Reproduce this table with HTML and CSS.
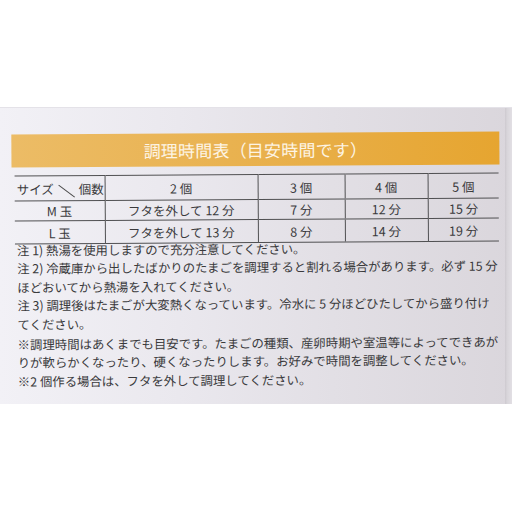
FILE: index.html
```html
<!DOCTYPE html>
<html lang="ja">
<head>
<meta charset="utf-8">
<link rel="stylesheet" href="styles.css">
</head>
<body>
<div class="top"></div>
<div class="panel">
  <div class="content">
    <div class="banner">調理時間表（目安時間です）</div>
    <table class="tbl">
      <colgroup>
        <col class="c1"><col class="c2"><col class="c3"><col class="c4"><col class="c5">
      </colgroup>
      <tr class="r-head">
        <td class="size">サイズ<svg class="slash" width="18" height="14" viewBox="0 0 18 14"><line x1="1" y1="1" x2="17" y2="13" stroke="#4a4a4a" stroke-width="1"/></svg>個数</td>
        <td>2 個</td>
        <td>3 個</td>
        <td>4 個</td>
        <td>5 個</td>
      </tr>
      <tr class="r-m">
        <td>M 玉</td>
        <td>フタを外して 12 分</td>
        <td>7 分</td>
        <td>12 分</td>
        <td>15 分</td>
      </tr>
      <tr class="r-l">
        <td>L 玉</td>
        <td>フタを外して 13 分</td>
        <td>8 分</td>
        <td>14 分</td>
        <td>19 分</td>
      </tr>
    </table>
    <div class="notes">
      <div class="line">注 1)&nbsp;熱湯を使用しますので充分注意してください。</div>
      <div class="line">注 2)&nbsp;冷蔵庫から出したばかりのたまごを調理すると割れる場合があります。必ず 15 分</div>
      <div class="line">ほどおいてから熱湯を入れてください。</div>
      <div class="line">注 3)&nbsp;調理後はたまごが大変熱くなっています。冷水に&nbsp;5&nbsp;分ほどひたしてから盛り付け</div>
      <div class="line">てください。</div>
      <div class="line gap">※調理時間はあくまでも目安です。たまごの種類、産卵時期や室温等によってできあが</div>
      <div class="line">りが軟らかくなったり、硬くなったりします。お好みで時間を調整してください。</div>
      <div class="line">※2 個作る場合は、フタを外して調理してください。</div>
    </div>
  </div>
</div>
</body>
</html>
```
FILE: styles.css
```css
html, body {
  margin: 0;
  padding: 0;
  background: #ffffff;
}
body {
  width: 512px;
  height: 512px;
  overflow: hidden;
  font-family: "Noto Sans CJK JP", "Noto Sans", sans-serif;
  color: #3a3a3c;
}
.top {
  height: 107px;
  background: #ffffff;
}
.panel {
  position: relative;
  height: 297px;
  background: linear-gradient(90deg, #f2f1f6 0%, #eae8ee 35%, #e2dfe5 65%, #dad6dc 100%);
  border-top: 1px solid #e4e2e8;
  box-sizing: border-box;
  overflow: hidden;
}
.panel::after {
  content: "";
  position: absolute;
  top: 0;
  bottom: 0;
  right: 0;
  width: 7px;
  background: linear-gradient(90deg, #cdc9cf 0%, #d8d5da 30%, #e2dfe4 100%);
}
.content {
  padding-top: 25px;
  transform: rotate(-0.35deg);
  transform-origin: 256px 140px;
}
.banner {
  margin-left: 12px;
  width: 488px;
  height: 33px;
  background: linear-gradient(90deg, #ecbc66 0%, #e9b250 45%, #e6a530 100%);
  color: #fdf4e4;
  font-size: 17px;
  line-height: 33px;
  text-align: center;
  letter-spacing: 0.2px;
}
.tbl {
  margin-top: 8px;
  margin-left: 15px;
  width: 484px;
  border-collapse: collapse;
  table-layout: fixed;
  font-size: 12.5px;
}
.c1 { width: 90px; }
.c2 { width: 153px; }
.c3 { width: 87px; }
.c4 { width: 83px; }
.c5 { width: 71px; }
.tbl td {
  border-top: 1px solid #505052;
  border-bottom: 1px solid #505052;
  border-left: 1px solid #505052;
  text-align: center;
  padding: 0;
  white-space: nowrap;
  color: #3a3a3c;
}
.tbl td:first-child {
  border-left: none;
}
.r-head td { height: 23px; padding-top: 1px; }
.r-m td { height: 19px; }
.r-l td { height: 22px; }
.tbl td.size {
  text-align: left;
  padding-left: 2px;
  font-size: 12.5px;
}
.slash {
  display: inline-block;
  vertical-align: middle;
  margin: 0 3px 0 4px;
}
.notes {
  margin-top: -3px;
  padding-left: 17px;
  font-size: 12.4px;
  line-height: 18.4px;
  color: #3a3a3c;
}
.line {
  white-space: nowrap;
}
.line.gap {
  margin-top: 2px;
}
```
